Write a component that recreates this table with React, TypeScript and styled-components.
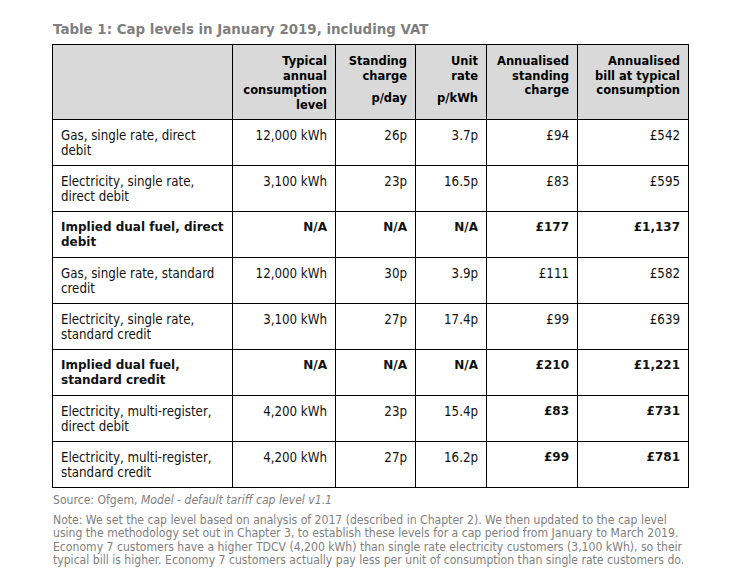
import React from "react";
import styled, { createGlobalStyle } from "styled-components";

const GlobalStyle = createGlobalStyle`
  html, body { margin: 0; padding: 0; background: #ffffff; }
  body { font-family: "DejaVu Sans Condensed", "DejaVu Sans", sans-serif; }
`;

const Page = styled.div`
  width: 751px;
  min-height: 586px;
  box-sizing: border-box;
  padding: 21px 0 0 52px;
`;

const Title = styled.h1`
  margin: 0 0 6px 1px;
  font-family: "DejaVu Sans", sans-serif;
  font-weight: bold;
  font-size: 13.4px;
  line-height: 17px;
  color: #7f7f7f;
`;

const Table = styled.table`
  border-collapse: collapse;
  table-layout: fixed;
  width: 636px;
  border: 1px solid #000;
`;

const HeadCell = styled.th`
  background: #d9d9d9;
  border: 1px solid #000;
  padding: 9px 8px 6px 8px;
  vertical-align: top;
  text-align: right;
  font-family: "DejaVu Sans", sans-serif;
  font-weight: bold;
  font-size: 11.5px;
  line-height: 14.5px;
  color: #000;
  height: 59px;
`;

const Unit = styled.div`
  margin-top: 8px;
`;

const Row = styled.tr`
  height: 46px;
`;

const Cell = styled.td<{ $bold?: boolean; $label?: boolean }>`
  border: 1px solid #000;
  padding: 8px 8px 6px 8px;
  vertical-align: top;
  text-align: ${(p) => (p.$label ? "left" : "right")};
  font-family: ${(p) =>
    p.$bold ? '"DejaVu Sans", sans-serif' : '"DejaVu Sans Condensed", "DejaVu Sans", sans-serif'};
  font-weight: ${(p) => (p.$bold ? "bold" : "normal")};
  font-size: ${(p) => (p.$bold ? "12px" : "13.2px")};
  line-height: 15px;
  color: #111;
`;

const Notes = styled.div`
  margin-top: 6px;
  font-family: "DejaVu Sans Condensed", "DejaVu Sans", sans-serif;
  font-size: 12.1px;
  line-height: 13.6px;
  color: #808080;
`;

const NoteLine = styled.p<{ $gap?: number }>`
  margin: 0 0 ${(p) => p.$gap ?? 0}px 1px;
  white-space: nowrap;
`;

const Line = styled.span`
  display: block;
`;

type RowData = {
  label: string;
  values: string[];
  boldLabel?: boolean;
  boldFrom?: number;
};

const rows: RowData[] = [
  { label: "Gas, single rate, direct debit", values: ["12,000 kWh", "26p", "3.7p", "£94", "£542"] },
  { label: "Electricity, single rate, direct debit", values: ["3,100 kWh", "23p", "16.5p", "£83", "£595"] },
  { label: "Implied dual fuel, direct debit", values: ["N/A", "N/A", "N/A", "£177", "£1,137"], boldLabel: true, boldFrom: 0 },
  { label: "Gas, single rate, standard credit", values: ["12,000 kWh", "30p", "3.9p", "£111", "£582"] },
  { label: "Electricity, single rate, standard credit", values: ["3,100 kWh", "27p", "17.4p", "£99", "£639"] },
  { label: "Implied dual fuel, standard credit", values: ["N/A", "N/A", "N/A", "£210", "£1,221"], boldLabel: true, boldFrom: 0 },
  { label: "Electricity, multi-register, direct debit", values: ["4,200 kWh", "23p", "15.4p", "£83", "£731"], boldFrom: 3 },
  { label: "Electricity, multi-register, standard credit", values: ["4,200 kWh", "27p", "16.2p", "£99", "£781"], boldFrom: 3 },
];

const noteLines = [
  "Note: We set the cap level based on analysis of 2017 (described in Chapter 2). We then updated to the cap level",
  "using the methodology set out in Chapter 3, to establish these levels for a cap period from January to March 2019.",
  "Economy 7 customers have a higher TDCV (4,200 kWh) than single rate electricity customers (3,100 kWh), so their",
  "typical bill is higher. Economy 7 customers actually pay less per unit of consumption than single rate customers do.",
];

export default function App() {
  return (
    <Page>
      <GlobalStyle />
      <Title>Table 1: Cap levels in January 2019, including VAT</Title>
      <Table>
        <colgroup>
          <col style={{ width: 180 }} />
          <col style={{ width: 103 }} />
          <col style={{ width: 80 }} />
          <col style={{ width: 71 }} />
          <col style={{ width: 91 }} />
          <col style={{ width: 111 }} />
        </colgroup>
        <thead>
          <tr>
            <HeadCell />
            <HeadCell>Typical annual consumption level</HeadCell>
            <HeadCell>
              Standing charge
              <Unit>p/day</Unit>
            </HeadCell>
            <HeadCell>
              Unit rate
              <Unit>p/kWh</Unit>
            </HeadCell>
            <HeadCell>Annualised standing charge</HeadCell>
            <HeadCell>Annualised bill at typical consumption</HeadCell>
          </tr>
        </thead>
        <tbody>
          {rows.map((r) => (
            <Row key={r.label}>
              <Cell $label $bold={r.boldLabel}>{r.label}</Cell>
              {r.values.map((v, i) => (
                <Cell key={i} $bold={r.boldFrom !== undefined && i >= r.boldFrom}>
                  {v}
                </Cell>
              ))}
            </Row>
          ))}
        </tbody>
      </Table>
      <Notes>
        <NoteLine $gap={6}>
          Source: Ofgem, <i>Model - default tariff cap level v1.1</i>
        </NoteLine>
        <NoteLine>
          {noteLines.map((l) => (
            <Line key={l}>{l}</Line>
          ))}
        </NoteLine>
      </Notes>
    </Page>
  );
}
